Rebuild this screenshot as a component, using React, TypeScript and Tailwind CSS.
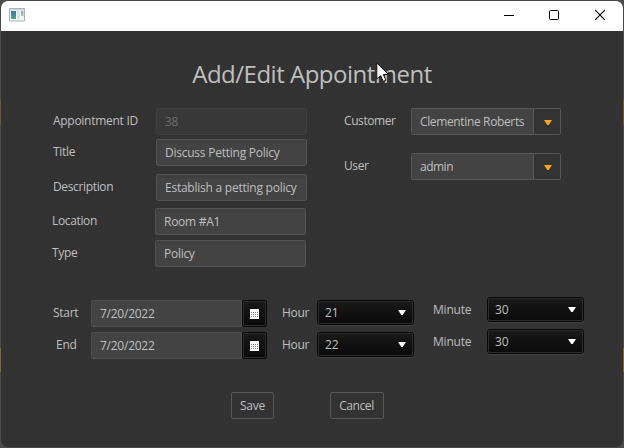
import type { ReactNode } from 'react';

function Label({ className = '', children }: { className?: string; children: ReactNode }) {
  return <span className={`block shrink-0 whitespace-nowrap leading-[16px] ${className}`}>{children}</span>;
}

function TextField({ value, disabled = false, className = '' }: { value: string; disabled?: boolean; className?: string }) {
  const tone = disabled ? 'border-[#3f3f3f] bg-[#383838] text-[#6b6b6b]' : 'border-[#535353] bg-linear-to-b from-[#3d3d3d] to-[#434343] to-20%';
  return (
    <div className={`flex h-[27px] w-[151px] shrink-0 items-center overflow-hidden whitespace-nowrap rounded-[2px] border pl-2 ${tone} ${className}`}>
      {value}
    </div>
  );
}

function ComboBox({ value, className = '' }: { value: string; className?: string }) {
  return (
    <div className="flex h-[27px] w-[150px] shrink-0 overflow-hidden rounded-[2px] border border-[#575757] bg-[#333]">
      <div className={`flex w-[122px] items-center whitespace-nowrap border-r border-[#575757] bg-[#434343] pl-2 ${className}`}>{value}</div>
      <div className="flex flex-1 items-center justify-center pl-px pt-px">
        <svg width="8" height="5" viewBox="0 0 8 5"><path d="M0 0h8L4.7 5H3.3z" fill="#f9a61c" /></svg>
      </div>
    </div>
  );
}

function DarkCombo({ value }: { value: string }) {
  return (
    <div className="h-[25px] w-[97px] shrink-0 rounded-[3px] border border-[#080808] shadow-[0_1px_0_#414141]">
      <div className="flex h-full items-center justify-between rounded-[2px] border border-[#2b2b2b] bg-linear-to-b from-[#191919] to-[#0a0a0a] pl-[6px] pr-[6px]">
        <span className="tracking-[-0.2px]">{value}</span>
        <svg width="8" height="5" viewBox="0 0 8 5"><path d="M0 0h8L4.7 5H3.3z" fill="#fff" /></svg>
      </div>
    </div>
  );
}

function DatePicker({ value }: { value: string }) {
  return (
    <div className="flex h-[27px] w-[176px] shrink-0">
      <div className="flex w-[151px] items-center rounded-l-[2px] border border-[#4e4e4e] bg-[#434343] pl-2 tracking-[-0.25px]">{value}</div>
      <div className="w-[25px] rounded-[2px] border border-[#080808]">
        <div className="flex h-full items-center justify-center rounded-[1px] border border-[#2b2b2b] bg-linear-to-b from-[#191919] to-[#0a0a0a] pt-[1px]">
          <svg width="9" height="10" viewBox="0 0 9 10" shapeRendering="crispEdges">
            <path d="M0 0h9v10H0z" fill="#fff" />
            {[3, 5, 7].map((y) => [1, 3, 5, 7].map((x) => <rect key={`${x}-${y}`} x={x} y={y} width="1" height="1" fill="#888" />))}
          </svg>
        </div>
      </div>
    </div>
  );
}

function TitleBar() {
  return (
    <header className="flex h-[30px] items-start bg-white pl-2">
      <svg width="16" height="14" viewBox="0 0 16 14" className="mt-[7px]">
        <path d="M.5.5h15v12.5H.5z" fill="#f3f4f5" stroke="#a9b0b6" />
        <path d="M1 1h14v1.5H1z" fill="#d3d9df" />
        <path d="M2 3h5v8H2z" fill="url(#pane)" />
        <path d="M8 3h3v8H8z" fill="#dfe2e5" />
        <path d="M12 3h2.5v3H12z" fill="#86b2d4" />
        <path d="M12 6h2.5v2H12z" fill="#a9cf9d" />
        <defs><linearGradient id="pane" x1="0" y1="0" x2="0" y2="1"><stop stopColor="#3d79a5" /><stop offset="1" stopColor="#51a581" /></linearGradient></defs>
      </svg>
      <div className="ml-auto mr-[18px] mt-[9px] flex gap-[35px]">
        <svg width="10" height="11" shapeRendering="crispEdges"><path d="M0 5.5h10" stroke="#000" /></svg>
        <svg width="10" height="10" viewBox="0 0 10 10"><rect x=".5" y=".5" width="9" height="9" rx="1" fill="none" stroke="#000" /></svg>
        <svg width="11" height="10" viewBox="0 0 11 10" className="overflow-visible"><path d="M1.2.2l9.6 9.6M10.8.2L1.2 9.8" stroke="#000" strokeWidth="1.1" /></svg>
      </div>
    </header>
  );
}

function TimeRow({ name, date, hour, minute, nameClass }: { name: string; date: string; hour: string; minute: string; nameClass: string }) {
  return (
    <div className="flex h-8 items-start">
      <Label className={`mt-2 w-[39px] ${nameClass}`}>{name}</Label>
      <div className="mt-[3px]"><DatePicker value={date} /></div>
      <Label className="ml-[15px] mt-2 w-[35px]">Hour</Label>
      <div className="mt-[3px]"><DarkCombo value={hour} /></div>
      <Label className="ml-[19px] mt-[5px] w-[54px] tracking-[-0.2px]">Minute</Label>
      <DarkCombo value={minute} />
    </div>
  );
}

export default function App() {
  return (
    <div className="h-[448px] w-[624px] overflow-hidden bg-[#4b494b] bg-[linear-gradient(to_bottom,transparent_100px,#6b5a38_100px,#6b5a38_125px,transparent_125px,transparent_348px,#7d6639_348px,#7d6639_372px,transparent_372px)] p-px font-['Open_Sans','Noto_Sans',sans-serif] text-[12px] leading-[16px] tracking-[-0.28px] text-[#bfbfbf]">
      <div className="relative h-[446px] w-[622px] overflow-hidden rounded-[7px] bg-[#323232]">
        <TitleBar />
        <h1 className="mb-px mt-[26px] text-center text-[24px] leading-[34px] tracking-[-0.5px]">Add/Edit Appointment</h1>
        <main className="pl-[52px]">
          <div className="flex pt-4">
            <section className="w-[291px]">
              <div className="flex h-[31px]"><Label className="mt-[5px] w-[103px]">Appointment ID</Label><TextField value="38" disabled /></div>
              <div className="flex h-[35px]"><Label className="mt-[5px] w-[103px]">Title</Label><TextField value="Discuss Petting Policy" className="tracking-[-0.24px]" /></div>
              <div className="flex h-[34px]"><Label className="mt-[5px] w-[103px] tracking-[-0.35px]">Description</Label><TextField value="Establish a petting policy" className="tracking-[-0.24px]" /></div>
              <div className="-ml-px flex h-8"><Label className="mt-[5px] w-[103px] tracking-[-0.35px]">Location</Label><TextField value="Room #A1" /></div>
              <div className="-ml-px flex h-[27px]"><Label className="mt-[5px] w-[103px]">Type</Label><TextField value="Policy" /></div>
            </section>
            <section>
              <div className="flex h-[45px]"><Label className="mt-[5px] w-[67px] tracking-[-0.42px]">Customer</Label><ComboBox value="Clementine Roberts" className="tracking-[-0.36px]" /></div>
              <div className="flex"><Label className="mt-[5px] w-[67px] tracking-[-0.4px]">User</Label><ComboBox value="admin" className="tracking-[-0.5px]" /></div>
            </section>
          </div>
          <section className="-ml-px mt-[30px]">
            <TimeRow name="Start" date="7/20/2022" hour="21" minute="30" nameClass="pl-px" />
            <TimeRow name="End" date="7/20/2022" hour="22" minute="30" nameClass="pl-1" />
          </section>
          <div className="ml-[178px] mt-[31px] flex gap-14">
            <button className="h-[27px] w-[43px] rounded-[2px] border border-[#575757]">Save</button>
            <button className="h-[27px] w-[54px] rounded-[2px] border border-[#575757] pr-px tracking-[-0.4px]">Cancel</button>
          </div>
        </main>
        <svg width="14" height="21" viewBox="0 0 14 21" className="absolute left-[375px] top-[61px]">
          <path d="M.8 1v16l3.8-3.5 2.6 5.9 2.7-1.2-2.6-5.7h5.2z" fill="#fff" stroke="#111" strokeWidth="1" />
        </svg>
      </div>
    </div>
  );
}
